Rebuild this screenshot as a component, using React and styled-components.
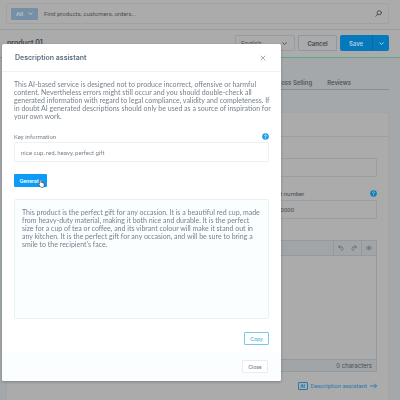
import React from 'react'
import styled, { createGlobalStyle } from 'styled-components'

const notice = `This AI-based service is designed not to produce incorrect, offensive or harmful
content. Nevertheless errors might still occur and you should double-check all
generated information with regard to legal compliance, validity and completeness. If
in doubt AI generated descriptions should only be used as a source of inspiration for
your own work.`

const description = `This product is the perfect gift for any occasion. It is a beautiful red cup, made
from heavy-duty material, making it both nice and durable. It is the perfect
size for a cup of tea or coffee, and its vibrant colour will make it stand out in
any kitchen. It is the perfect gift for any occasion, and will be sure to bring a
smile to the recipient's face.`

const App = () => {
  return (
    <>
      <GlobalStyle />
      <Page>
        <SearchHeader>
          <SearchBar>
            <ScopeButton type="button">
              All <Chevron color="#b9c3ca" />
            </ScopeButton>
            <SearchInput type="search" aria-label="Search" placeholder="Find products, customers, orders..." />
            <SearchIcon />
          </SearchBar>
        </SearchHeader>

        <SmartBar>
          <ProductTitle>product 01</ProductTitle>
          <LanguageSelect>
            <select aria-label="Language" defaultValue="en">
              <option value="en">English</option>
            </select>
            <Chevron color="#4b5259" />
          </LanguageSelect>
          <CancelButton type="button">Cancel</CancelButton>
          <SaveGroup>
            <SaveButton type="button">Save</SaveButton>
            <SaveMenuButton type="button" aria-label="More save options">
              <Chevron color="#b4cfdf" />
            </SaveMenuButton>
          </SaveGroup>
        </SmartBar>

        <Content>
          <Tabs>
            <Tab href="#cross">Cross Selling</Tab>
            <Tab href="#reviews">Reviews</Tab>
          </Tabs>
          <Card>
            <CardHeader />
            <CardBody>
              <CardInput aria-label="Name" />
              <FieldRow>
                <div />
                <div>
                  <FieldHead>
                    <label htmlFor="number">Product number</label>
                    <HelpIcon color="#0a7fbd" mark="#b5c9d4" />
                  </FieldHead>
                  <CardInput id="number" defaultValue="SW10000" />
                </div>
              </FieldRow>
              <Editor>
                <EditorTools>
                  <ToolGroup>
                    <ToolButton type="button" aria-label="Undo"><UndoIcon /></ToolButton>
                    <ToolButton type="button" aria-label="Redo"><UndoIcon flip /></ToolButton>
                  </ToolGroup>
                  <ToolGroup>
                    <ToolButton type="button" aria-label="Show code"><EyeIcon /></ToolButton>
                  </ToolGroup>
                </EditorTools>
                <EditorText aria-label="Description" />
                <EditorFooter>0 characters</EditorFooter>
              </Editor>
              <AssistantLink href="#assistant">
                <Badge>AI</Badge>
                Description assistant
                <ArrowIcon />
              </AssistantLink>
            </CardBody>
          </Card>
        </Content>
      </Page>

      <Backdrop>
        <Modal role="dialog" aria-labelledby="modal-title">
          <ModalHeader>
            <ModalTitle id="modal-title">Description assistant</ModalTitle>
            <IconButton type="button" aria-label="Close dialog">
              <CrossIcon />
            </IconButton>
          </ModalHeader>
          <ModalBody>
            <Notice>{notice}</Notice>
            <ModalLabel>
              <label htmlFor="keys">Key information</label>
              <HelpIcon color="#189eeb" mark="#ffffff" />
            </ModalLabel>
            <KeyInput id="keys" defaultValue="nice cup, red, heavy, perfect gift" />
            <GenerateButton type="button">
              Generate
              <Pointer />
            </GenerateButton>
            <Result aria-label="Generated description" defaultValue={description} />
            <CopyButton type="button">Copy</CopyButton>
          </ModalBody>
          <ModalFooter>
            <CloseButton type="button">Close</CloseButton>
          </ModalFooter>
        </Modal>
      </Backdrop>
    </>
  )
}

export default App

const Chevron = ({ color }) => (
  <svg width="5" height="5" viewBox="0 0 10 10" fill="none" stroke={color} strokeWidth="2" strokeLinecap="round" strokeLinejoin="round">
    <path d="M1.500 3.500 5 7l3.500-3.500" />
  </svg>
)

const SearchIcon = () => (
  <svg width="7" height="7" viewBox="0 0 14 14" fill="none" stroke="#42494f" strokeWidth="1.800" strokeLinecap="round">
    <circle cx="8.500" cy="5.500" r="4.200" />
    <path d="M5.400 8.600 1.500 12.300" />
  </svg>
)

const HelpIcon = ({ color, mark }) => (
  <svg width="7" height="7" viewBox="0 0 14 14" fill="none">
    <circle cx="7" cy="7" r="6.600" fill={color} />
    <path d="M5 5.400a2 2 0 1 1 3 1.800c-.7.400-1 .7-1 1.300" stroke={mark} strokeWidth="1.500" strokeLinecap="round" />
    <circle cx="7" cy="10.700" r=".9" fill={mark} />
  </svg>
)

const UndoIcon = ({ flip }) => (
  <svg width="6" height="6" viewBox="0 0 12 12" fill="none" stroke="#596067" strokeWidth="1.500" strokeLinecap="round" strokeLinejoin="round">
    <g transform={flip ? 'matrix(-1 0 0 1 12 0)' : undefined}>
      <path d="M4.500 1 1.500 4l3 3M1.500 4h5.500a3 3 0 0 1 3 3.200c0 2-1.300 3.300-3.500 3.300" />
    </g>
  </svg>
)

const EyeIcon = () => (
  <svg width="6" height="6" viewBox="0 0 12 12" fill="none" stroke="#596067" strokeWidth="1.300">
    <path d="M.8 6C2 3.800 3.800 2.700 6 2.700S10 3.800 11.200 6C10 8.200 8.200 9.300 6 9.300S2 8.200.8 6z" />
    <circle cx="6" cy="6" r="1.700" />
  </svg>
)

const ArrowIcon = () => (
  <svg width="7" height="6" viewBox="0 0 14 12" fill="none" stroke="#2379ae" strokeWidth="1.800" strokeLinecap="round" strokeLinejoin="round">
    <path d="M1 6h12M9 2l4 4-4 4" />
  </svg>
)

const CrossIcon = () => (
  <svg width="6" height="6" viewBox="0 0 12 12" fill="none" stroke="#8593a0" strokeWidth="1.500" strokeLinecap="round">
    <path d="m2 2 8 8M10 2l-8 8" />
  </svg>
)

const Pointer = () => (
  <PointerSvg width="7" height="9" viewBox="0 0 16 20" fill="#fff" stroke="#2b3238" strokeWidth="1.500" strokeLinejoin="round">
    <path d="M5 1.500c1.200 0 1.700.8 1.700 1.800v4.500c.5-.6 2.200-.6 2.600.4.700-.6 2.200-.4 2.500.6.800-.5 2.500-.1 2.500 1.500v3.400c0 3.400-1.500 5.300-5 5.300-3 0-4.200-1.200-5.300-3.400L1.700 11.500c-.6-1.300.9-2.200 1.600-1.200V3.300c0-1 .5-1.800 1.700-1.800z" />
  </PointerSvg>
)

const GlobalStyle = createGlobalStyle`
* {
  box-sizing: border-box;
}
body {
  margin: 0;
  overflow: hidden;
  background: #a5a8ab;
  font-family: Roboto, "Liberation Sans", sans-serif;
}
button, input, select, textarea {
  margin: 0;
  font-family: inherit;
}
svg {
  display: block;
  flex: none;
}
`;

const Page = styled.div`
height: 100vh;
overflow: hidden;
`;

const SearchHeader = styled.header`
background: #ababab;
border-bottom: 1px solid #94a29e;
padding: 3px 11px 5px 6px;
`;

const SearchBar = styled.div`
display: flex;
align-items: center;
height: 21px;
padding: 0 6px 0 4px;
border: 1px solid #a0a2a4;
border-radius: 2px;
`;

const ScopeButton = styled.button`
display: flex;
align-items: center;
justify-content: space-between;
width: 27px;
height: 12px;
padding: 0 5px;
border: 0;
border-radius: 1px;
background: #758fa6;
color: #b9c3ca;
font-size: 6px;
font-weight: 600;
`;

const SearchInput = styled.input`
flex: 1;
min-width: 0;
padding: 0 6px;
border: 0;
outline: 0;
background: transparent;
font-size: 6px;
&::placeholder {
  color: #4b4f53;
  opacity: 1;
}
`;

const SmartBar = styled.div`
display: flex;
align-items: flex-start;
height: 28px;
padding: 5px 11px 0 7px;
background: #ababab;
border-bottom: 1px solid #5aa888;
font-family: Inter, "Liberation Sans", sans-serif;
`;

const ProductTitle = styled.h1`
flex: 1;
margin: 0;
color: #3c444b;
font-size: 7px;
font-weight: 600;
line-height: 16px;
`;

const LanguageSelect = styled.div`
display: flex;
align-items: center;
width: 60px;
height: 16px;
margin-right: 3px;
padding: 0 7px 0 5px;
border: 1px solid #999c9f;
border-radius: 1px;
select {
  flex: 1;
  appearance: none;
  padding: 0;
  border: 0;
  background: transparent;
  color: #4b5259;
  font-size: 6px;
}
`;

const CancelButton = styled.button`
width: 39px;
height: 16px;
margin-right: 3px;
padding: 0;
border: 1px solid #92979b;
border-radius: 1px;
background: #a9abad;
color: #3e464d;
font-size: 6px;
font-weight: 600;
`;

const SaveGroup = styled.div`
display: flex;
height: 16px;
border-radius: 2px;
overflow: hidden;
`;

const SaveButton = styled.button`
width: 32px;
padding: 0;
border: 0;
background: #0679bd;
color: #b4cfdf;
font-size: 6px;
font-weight: 600;
`;

const SaveMenuButton = styled.button`
display: grid;
place-items: center;
width: 17px;
padding: 0;
border: 0;
border-left: 1px solid #066ba8;
background: #0679bd;
`;

const Content = styled.main`
padding: 17px 11px 0 6px;
`;

const Tabs = styled.nav`
display: flex;
justify-content: flex-end;
gap: 15px;
height: 15px;
padding-right: 38px;
border-bottom: 1px solid #888d92;
font-family: Inter, "Liberation Sans", sans-serif;
line-height: 15px;
`;

const Tab = styled.a`
color: #464d54;
font-size: 6px;
font-weight: 500;
text-decoration: none;
`;

const Card = styled.section`
height: 400px;
margin-top: 22px;
background: #ababab;
border: 1px solid #a3a5a7;
`;

const CardHeader = styled.div`
height: 24px;
border-bottom: 1px solid #9c9fa1;
`;

const CardBody = styled.div`
padding: 21px 11px 0;
`;

const CardInput = styled.input`
display: block;
width: 100%;
height: 19px;
padding: 0 6px;
border: 1px solid #9b9ea1;
border-radius: 1px;
background: transparent;
color: #464d54;
font-size: 6px;
`;

const FieldRow = styled.div`
display: grid;
grid-template-columns: 2fr 1fr;
gap: 12px;
margin-top: 12px;
`;

const FieldHead = styled.div`
display: flex;
align-items: center;
justify-content: space-between;
height: 8px;
margin-bottom: 3px;
color: #464d54;
font-size: 6px;
`;

const Editor = styled.div`
margin-top: 21px;
border: 1px solid #94999d;
border-radius: 1px;
`;

const EditorTools = styled.div`
display: flex;
justify-content: flex-end;
height: 15px;
background: #a2a5a8;
border-bottom: 1px solid #94999d;
`;

const ToolGroup = styled.div`
display: flex;
align-items: center;
gap: 7px;
padding: 0 4px;
border-left: 1px solid #94999d;
`;

const ToolButton = styled.button`
padding: 0;
border: 0;
background: transparent;
`;

const EditorText = styled.textarea`
display: block;
width: 100%;
height: 103px;
border: 0;
background: transparent;
resize: none;
`;

const EditorFooter = styled.div`
height: 12px;
padding-right: 4px;
background: #a2a5a8;
border-top: 1px solid #94999d;
color: #464d54;
font-family: Inter, "Liberation Sans", sans-serif;
font-size: 6px;
line-height: 12px;
text-align: right;
`;

const AssistantLink = styled.a`
display: flex;
align-items: center;
justify-content: flex-end;
gap: 3px;
margin-top: 10px;
color: #2379ae;
font-size: 6px;
line-height: 8px;
text-decoration: none;
`;

const Badge = styled.span`
width: 10px;
height: 8px;
border: 1px solid #2379ae;
border-radius: 1px;
font-size: 5px;
font-weight: 700;
line-height: 6px;
text-align: center;
`;

const Backdrop = styled.div`
position: fixed;
inset: 0;
padding: 44px 119px 0 2px;
`;

const Modal = styled.div`
background: #fff;
border-radius: 2px;
box-shadow: 0 1px 3px rgba(0, 0, 0, 0.25);
`;

const ModalHeader = styled.div`
display: flex;
align-items: center;
justify-content: space-between;
height: 28px;
padding: 0 15px 0 13px;
border-bottom: 1px solid #eef2f4;
`;

const ModalTitle = styled.h2`
margin: 0;
color: #5b6e80;
font-family: Inter, "Liberation Sans", sans-serif;
font-size: 7px;
font-weight: 600;
`;

const IconButton = styled.button`
padding: 0;
border: 0;
background: transparent;
`;

const ModalBody = styled.div`
display: flex;
flex-direction: column;
padding: 8px 12px 7px;
`;

const Notice = styled.p`
margin: 0;
color: #75838f;
font-family: Lato, "Liberation Sans", sans-serif;
font-size: 7px;
line-height: 8px;
white-space: pre;
`;

const ModalLabel = styled.div`
display: flex;
align-items: center;
justify-content: space-between;
height: 8px;
margin-top: 12px;
color: #75838f;
font-size: 6px;
`;

const KeyInput = styled.input`
width: 100%;
height: 20px;
margin-top: 2px;
padding: 0 6px;
border: 1px solid #edf1f3;
border-radius: 1px;
color: #75838f;
font-size: 6px;
`;

const GenerateButton = styled.button`
position: relative;
align-self: flex-start;
width: 33px;
height: 13px;
margin-top: 12px;
padding: 0;
border: 0;
border-radius: 1px;
background: #0c9bf7;
color: #fff;
font-family: Inter, "Liberation Sans", sans-serif;
font-size: 5px;
font-weight: 600;
`;

const PointerSvg = styled.svg`
position: absolute;
left: 24px;
top: 5px;
`;

const Result = styled.textarea`
display: block;
width: 100%;
height: 120px;
margin-top: 12px;
padding: 8px 7px;
border: 1px solid #e9f1f2;
border-radius: 2px;
background: #fafefe;
color: #75838f;
font-family: Lato, "Liberation Sans", sans-serif;
font-size: 7px;
line-height: 8px;
resize: none;
overflow: hidden;
`;

const CopyButton = styled.button`
align-self: flex-end;
width: 25px;
height: 13px;
margin-top: 13px;
padding: 0;
border: 1px solid #75c9e6;
border-radius: 1px;
background: #fff;
color: #3db5de;
font-family: Inter, "Liberation Sans", sans-serif;
font-size: 5px;
font-weight: 500;
`;

const ModalFooter = styled.div`
display: flex;
align-items: center;
justify-content: flex-end;
height: 29px;
padding-right: 13px;
background: #fafefe;
border-radius: 0 0 2px 2px;
`;

const CloseButton = styled.button`
width: 26px;
height: 13px;
padding: 0;
border: 1px solid #e8ecee;
border-radius: 1px;
background: #fff;
color: #75838f;
font-family: Inter, "Liberation Sans", sans-serif;
font-size: 5px;
font-weight: 500;
`;
